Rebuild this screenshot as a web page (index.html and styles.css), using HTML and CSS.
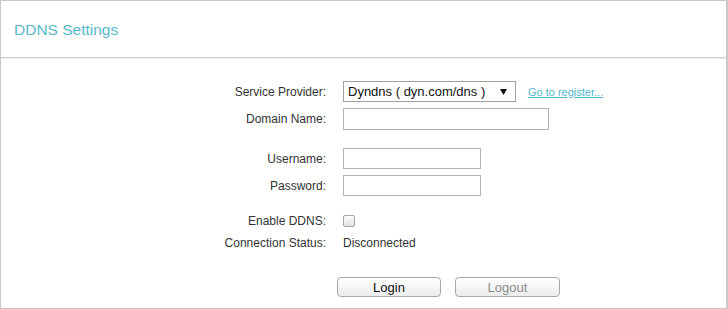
FILE: index.html
```html
<!DOCTYPE html>
<html lang="en">
<head>
  <meta charset="UTF-8" />
  <meta name="viewport" content="width=device-width, initial-scale=1.0"/>
  <title>DDNS Settings</title>
  <link rel="stylesheet" href="styles.css">
</head>
<body>
  <div class="panel">
    <div class="panel-head">
      <h2>DDNS Settings</h2>
    </div>
    <form class="panel-body">
      <div class="group">
        <div class="row">
          <label>Service Provider:</label>
          <div class="field">
            <div class="select">
              <span>Dyndns ( dyn.com/dns )</span>
              <svg width="7" height="6" viewBox="0 0 7 6"><path d="M0 0 L7 0 L3.5 6 Z" fill="#111"/></svg>
            </div>
            <a href="#" class="register">Go to register...</a>
          </div>
        </div>
        <div class="row">
          <label>Domain Name:</label>
          <div class="field"><input type="text" class="input-wide"></div>
        </div>
      </div>

      <div class="group">
        <div class="row">
          <label>Username:</label>
          <div class="field"><input type="text" class="input-short"></div>
        </div>
        <div class="row">
          <label>Password:</label>
          <div class="field"><input type="password" class="input-short"></div>
        </div>
      </div>

      <div class="group small">
        <div class="row">
          <label>Enable DDNS:</label>
          <div class="field"><input type="checkbox" class="check"></div>
        </div>
        <div class="row">
          <label>Connection Status:</label>
          <div class="field"><span class="status">Disconnected</span></div>
        </div>
      </div>

      <div class="actions">
        <button type="button">Login</button>
        <button type="button" class="disabled">Logout</button>
      </div>
    </form>
  </div>
</body>
</html>
```

FILE: styles.css
```css
* {
  box-sizing: border-box;
  margin: 0;
  padding: 0;
  font-family: 'Liberation Sans', Arial, sans-serif;
}

body {
  background: #fff;
  color: #333;
}

.panel {
  width: 728px;
  height: 309px;
  border: 1px solid #c8c8c8;
  border-right-width: 2px;
}

.panel-head {
  height: 57px;
  display: flex;
  align-items: center;
  padding-left: 13px;
  padding-top: 1px;
  border-bottom: 1px solid #d2d2d2;
  box-shadow: 0 1px 0 #ebebeb;
}

.panel-head h2 {
  font-size: 15.5px;
  font-weight: normal;
  color: #58b8ca;
}

.panel-body {
  padding-top: 20px;
}

.group + .group {
  margin-top: 13px;
}

.group.small {
  margin-top: 11px;
}

.row {
  display: grid;
  grid-template-columns: 325px 1fr;
  column-gap: 17px;
  align-items: center;
  height: 27px;
  font-size: 12px;
}

.group.small .row {
  height: 22px;
}

.row label {
  text-align: right;
  color: #333;
}

.field {
  display: flex;
  align-items: center;
}

.select {
  width: 173px;
  height: 21px;
  border: 1px solid #a0a0a0;
  display: flex;
  align-items: center;
  justify-content: space-between;
  padding: 0 8px 0 4px;
  font-size: 13px;
  color: #111;
}

.register {
  margin-left: 12px;
  font-size: 11px;
  color: #4fb6cb;
}

input[type="text"],
input[type="password"] {
  height: 22px;
  border: 1px solid #b4b4b4;
  outline: none;
  font-size: 12px;
  padding: 0 4px;
}

.input-wide {
  width: 206px;
}

.input-short {
  width: 138px;
  height: 21px !important;
}

.check {
  appearance: none;
  width: 12px;
  height: 12px;
  border: 1px solid #a4a4a4;
  border-radius: 2px;
  background: linear-gradient(#fdfdfd, #e4e4e4);
}

.status {
  color: #333;
}

.actions {
  display: flex;
  gap: 14px;
  padding-left: 336px;
  margin-top: 23px;
}

.actions button {
  width: 104px;
  height: 20px;
  border: 1px solid #a8a8a8;
  border-radius: 4px;
  background: linear-gradient(#ffffff, #ececec);
  font-size: 13px;
  color: #111;
}

.actions button.disabled {
  width: 105px;
  color: #8c8c8c;
}
```
